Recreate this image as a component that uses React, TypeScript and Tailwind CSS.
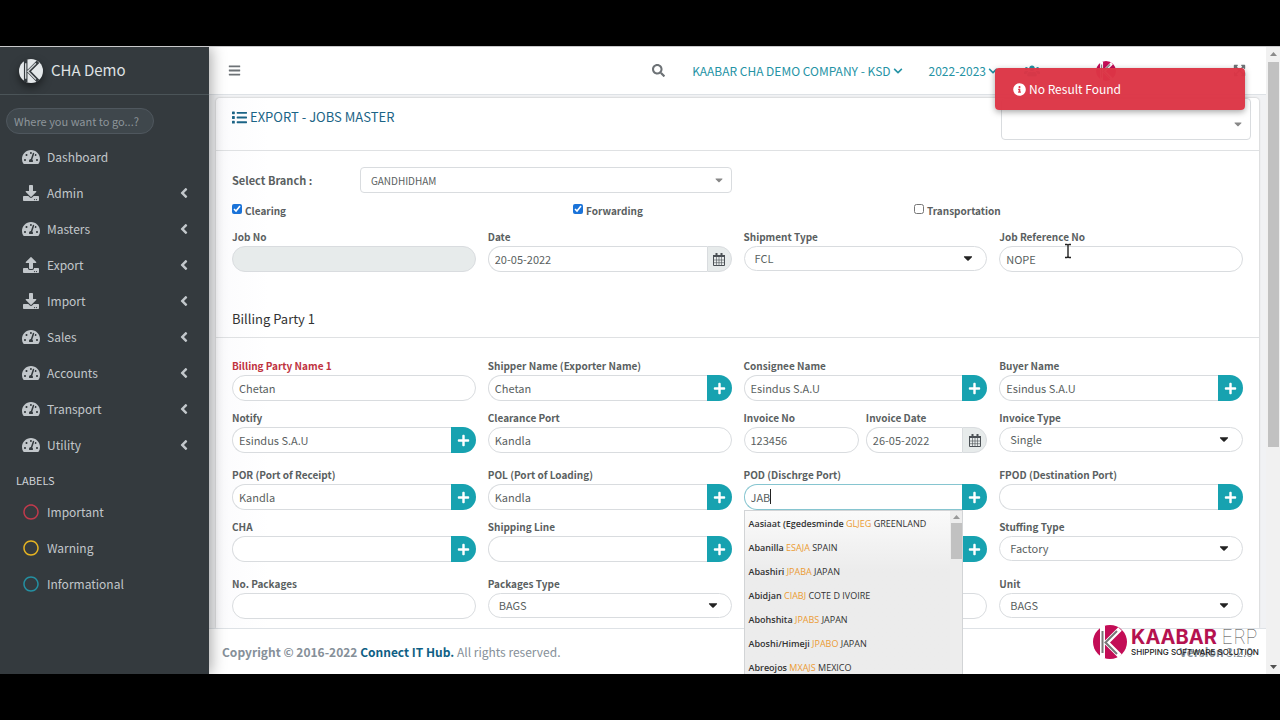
import type { ReactNode } from 'react';
import {
  FaAngleLeft,
  FaBars,
  FaCaretDown,
  FaChevronDown,
  FaDownload,
  FaExpandArrowsAlt,
  FaInfoCircle,
  FaList,
  FaPlus,
  FaRegCircle,
  FaSearch,
  FaTachometerAlt,
  FaUpload,
  FaUsers,
} from 'react-icons/fa';

const menu = [
  { name: 'Dashboard', icon: FaTachometerAlt, tree: false },
  { name: 'Admin', icon: FaDownload, tree: true },
  { name: 'Masters', icon: FaTachometerAlt, tree: true },
  { name: 'Export', icon: FaUpload, tree: true },
  { name: 'Import', icon: FaDownload, tree: true },
  { name: 'Sales', icon: FaTachometerAlt, tree: true },
  { name: 'Accounts', icon: FaTachometerAlt, tree: true },
  { name: 'Transport', icon: FaTachometerAlt, tree: true },
  { name: 'Utility', icon: FaTachometerAlt, tree: true },
];

const labels = [
  { name: 'Important', color: 'text-[#c03a4c]' },
  { name: 'Warning', color: 'text-[#e6b422]' },
  { name: 'Informational', color: 'text-[#2490a2]' },
];

const ports = [
  { name: 'Aasiaat (Egedesminde', code: 'GLJEG', country: 'GREENLAND' },
  { name: 'Abanilla', code: 'ESAJA', country: 'SPAIN' },
  { name: 'Abashiri', code: 'JPABA', country: 'JAPAN' },
  { name: 'Abidjan', code: 'CIABJ', country: 'COTE D IVOIRE' },
  { name: 'Abohshita', code: 'JPABS', country: 'JAPAN' },
  { name: 'Aboshi/Himeji', code: 'JPABO', country: 'JAPAN' },
  { name: 'Abreojos', code: 'MXAJS', country: 'MEXICO' },
];

export default function App() {
  return (
    <div className="flex h-screen flex-col overflow-hidden bg-black font-['Noto_Sans_CJK_SC','Noto_Sans',sans-serif] text-[#5a5f61]">
      <div className="h-[46px] shrink-0" />
      <div className="relative flex min-h-0 flex-1 overflow-hidden border-t border-[#c9c9cb] bg-[#f4f6f9]">
        <Sidebar />
        <div className="flex min-w-0 flex-1 flex-col">
          <Navbar />
          <main className="bg-[#f1f2f4] px-[7px] pt-[3px]">
            <JobForm />
          </main>
          <footer className="flex flex-1 items-start justify-between border-t border-[#dee2e6] bg-white px-[13px] pt-[11px] text-[12px] leading-6 text-[#869099]">
            <p>
              <strong>
                Copyright © 2016-2022 <a href="#" className="text-[#0f5f85]">Connect IT Hub.</a>
              </strong>{' '}
              All rights reserved.
            </p>
            <p>
              <b>Version</b> 3.2.0
            </p>
          </footer>
        </div>
        <Scrollbar />
        <Toast />
        <Watermark />
        {/* Text pointer */}
        <svg className="absolute top-[196px] left-[1063px] h-4 w-[10px] text-[#222]" viewBox="0 0 10 16" fill="none" stroke="currentColor" strokeWidth="1.4">
          <path d="M2 1.500h2l1 .8 1-.8h2M5 2v11.500M2 14.500h2l1-.8 1 .8h2" />
        </svg>
      </div>
      <div className="h-[46px] shrink-0" />
    </div>
  );
}

function Sidebar() {
  return (
    <aside className="z-10 flex w-[209px] shrink-0 flex-col bg-[#343a3e] text-[#c2c7cb] shadow-[2px_0_14px_rgba(0,0,0,0.35)]">
      <a href="#" className="flex h-12 items-center gap-2 border-b border-[#4b5458] pl-[19px] text-[15px] text-[#dfe1e3]">
        <span className="rounded-full shadow-[0_4px_8px_rgba(0,0,0,0.5)]">
          <KaabarMark className="h-6 w-6" disc="#e4e8ea" stroke="#343a3e" letter="#cfd3d6" />
        </span>
        CHA Demo
      </a>
      <input
        type="text"
        aria-label="Search menu"
        placeholder="Where you want to go...?"
        className="mt-[13px] mb-[5px] ml-[6px] h-[26px] w-[148px] rounded-full border border-[#4f575e] bg-[#3f474c] px-[7px] text-[11px] placeholder:text-[#8d959a]"
      />
      <nav>
        {menu.map(({ name, icon: Icon, tree }) => (
          <a key={name} href="#" className="flex h-9 items-center pr-5 pl-[22px] text-[12px]">
            <Icon className="mr-[7px] h-4 w-[18px]" />
            <span className="flex-1">{name}</span>
            {tree && <FaAngleLeft className="h-4 w-[10px]" />}
          </a>
        ))}
        <h2 className="flex h-[31px] items-end pb-1 pl-4 text-[11px] leading-5 text-[#d0d4d8]">LABELS</h2>
        {labels.map(({ name, color }) => (
          <a key={name} href="#" className="flex h-9 items-center pl-[22px] text-[12px]">
            <FaRegCircle className={`mr-[7px] h-4 w-[18px] ${color}`} />
            {name}
          </a>
        ))}
      </nav>
    </aside>
  );
}

function Navbar() {
  return (
    <header className="flex h-12 shrink-0 items-center border-b border-[#dee2e6] bg-white pr-5 pl-[19px] text-[12px] text-[#2593a5]">
      <button aria-label="Toggle menu" className="text-[#6d7276]">
        <FaBars className="h-[13px] w-[13px]" />
      </button>
      <button aria-label="Search" className="mr-[27px] ml-auto text-[#6d7276]">
        <FaSearch className="h-[13px] w-[13px]" />
      </button>
      <button className="mr-[26px] flex items-center gap-[2px]">
        KAABAR CHA DEMO COMPANY - KSD <FaChevronDown className="h-[10px] w-[10px]" />
      </button>
      <button className="mr-[26px] flex items-center gap-[2px]">
        2022-2023 <FaChevronDown className="h-[10px] w-[10px]" />
      </button>
      <button aria-label="Users" className="mr-[54px]">
        <FaUsers className="h-4 w-4" />
      </button>
      <KaabarMark className="mr-[115px] h-5 w-6" disc="#c30d56" stroke="#fff" letter="#888" />
      <button aria-label="Full screen" className="text-[#6d7276]">
        <FaExpandArrowsAlt className="h-[13px] w-[13px]" />
      </button>
    </header>
  );
}

function JobForm() {
  return (
    <form className="rounded-t bg-linear-to-r from-[#fbfbfd] to-white to-5% shadow-[0_0_2px_rgba(0,0,0,0.3)]">
      <div className="flex h-[53px] justify-between border-b border-[#dfe1e3] pr-2 pl-4">
        <h1 className="flex items-center gap-[3px] self-start pt-[9px] text-[13px] leading-5 text-[#1b6486]">
          <FaList className="h-[15px] w-[15px]" /> EXPORT - JOBS MASTER
        </h1>
        <div className="relative h-[42px] w-[250px]">
          <select aria-label="Job" className="block h-full w-full appearance-none rounded border border-[#d9dcdf] bg-white" />
          <FaCaretDown className="pointer-events-none absolute right-[7px] bottom-[10px] h-3 w-3 text-[#888]" />
        </div>
      </div>

      <div className="px-4 pt-4">
        <div className="grid grid-cols-8 items-center gap-x-3">
          <label htmlFor="branch" className="text-[11px] font-bold whitespace-nowrap">
            Select Branch :
          </label>
          <div className="relative col-span-3">
            <select id="branch" className="block h-[26px] w-full appearance-none rounded border border-[#d9dcdf] bg-white px-[10px] text-[10px]">
              <option>GANDHIDHAM</option>
            </select>
            <FaCaretDown className="pointer-events-none absolute top-[7px] right-[7px] h-3 w-3 text-[#888]" />
          </div>
        </div>

        <div className="mt-2 grid grid-cols-3 gap-x-3">
          <Check id="clearing" label="Clearing" checked />
          <Check id="forwarding" label="Forwarding" checked />
          <Check id="transportation" label="Transportation" />
        </div>

        <Row className="mt-[9px]">
          <Field id="job-no" label="Job No" disabled />
          <Field id="date" label="Date" value="20-05-2022" addon="calendar" />
          <SelectField id="shipment" label="Shipment Type" value="FCL" />
          <Field id="reference" label="Job Reference No" value="NOPE" />
        </Row>
      </div>

      <h2 className="mt-9 border-b border-[#dfe1e3] px-4 pb-[7px] text-[13px] leading-[22px] text-[#333]">Billing Party 1</h2>

      <div className="px-4 pt-[19px] pb-[9px]">
        <Row>
          <Field id="billing" label="Billing Party Name 1" value="Chetan" required />
          <Field id="shipper" label="Shipper Name (Exporter Name)" value="Chetan" addon="plus" />
          <Field id="consignee" label="Consignee Name" value="Esindus S.A.U" addon="plus" />
          <Field id="buyer" label="Buyer Name" value="Esindus S.A.U" addon="plus" />
        </Row>
        <Row className="mt-2">
          <Field id="notify" label="Notify" value="Esindus S.A.U" addon="plus" />
          <Field id="clearance" label="Clearance Port" value="Kandla" />
          <div className="grid grid-cols-[19fr_20fr] gap-[7px]">
            <Field id="invoice-no" label="Invoice No" value="123456" />
            <Field id="invoice-date" label="Invoice Date" value="26-05-2022" addon="calendar" />
          </div>
          <SelectField id="invoice-type" label="Invoice Type" value="Single" />
        </Row>
        <Row className="mt-[13px]">
          <Field id="por" label="POR (Port of Receipt)" value="Kandla" addon="plus" />
          <Field id="pol" label="POL (Port of Loading)" value="Kandla" addon="plus" />
          <div className="relative">
            <Field id="pod" label="POD (Dischrge Port)" value="JAB" addon="plus" active />
            <PortList />
          </div>
          <Field id="fpod" label="FPOD (Destination Port)" addon="plus" />
        </Row>
        <Row className="mt-2">
          <Field id="cha" label="CHA" addon="plus" />
          <Field id="line" label="Shipping Line" addon="plus" />
          <Field id="forwarder" addon="plus" />
          <SelectField id="stuffing" label="Stuffing Type" value="Factory" />
        </Row>
        <Row className="mt-[13px]">
          <Field id="packages" label="No. Packages" />
          <SelectField id="packages-type" label="Packages Type" value="BAGS" />
          <Field id="weight" />
          <SelectField id="unit" label="Unit" value="BAGS" />
        </Row>
      </div>
    </form>
  );
}

function Row({ className = '', children }: { className?: string; children: ReactNode }) {
  return <div className={`grid grid-cols-4 gap-x-3 ${className}`}>{children}</div>;
}

function Check({ id, label, checked = false }: { id: string; label: string; checked?: boolean }) {
  return (
    <div className="flex h-[18px] items-center gap-[3px]">
      <input id={id} type="checkbox" defaultChecked={checked} className="mb-[3px] h-[10px] w-[10px] accent-[#1a73d9]" />
      <label htmlFor={id} className="text-[10px] font-bold">{label}</label>
    </div>
  );
}

interface FieldProps {
  id: string;
  label?: string;
  value?: string;
  addon?: 'plus' | 'calendar';
  disabled?: boolean;
  required?: boolean;
  active?: boolean;
}

function Field({ id, label, value = '', addon, disabled, required, active }: FieldProps) {
  return (
    <div className="min-w-0">
      <label htmlFor={id} className={`block h-[18px] text-[10px] leading-[18px] font-bold whitespace-nowrap ${required ? 'text-[#c0333f]' : ''}`}>
        {label}
      </label>
      <div className="relative flex h-[26px]">
        <input
          id={id}
          type="text"
          aria-label={label ?? id}
          defaultValue={value}
          disabled={disabled}
          className={`min-w-0 flex-1 border px-[6px] text-[11px] ${addon ? 'rounded-l-full border-r-0' : 'rounded-full'} ${disabled ? 'bg-[#e7ebeb]' : 'bg-white'} ${active ? 'border-[#86c5d0]' : 'border-[#d9dcdf]'}`}
        />
        {active && <span className="absolute top-[5px] left-[26px] h-[15px] w-px bg-[#222]" />}
        {addon === 'plus' && (
          <button type="button" aria-label="Add" className="flex w-[25px] items-center justify-center rounded-r-full bg-[#17a2b0] text-white">
            <FaPlus className="h-[13px] w-[13px]" />
          </button>
        )}
        {addon === 'calendar' && (
          <button type="button" aria-label="Pick date" className="flex w-[25px] items-center justify-center rounded-r-full border border-[#d9dcdf] bg-[#e7ebeb] text-[#4b5055]">
            <CalendarIcon />
          </button>
        )}
      </div>
    </div>
  );
}

function SelectField({ id, label, value }: { id: string; label: string; value: string }) {
  return (
    <div className="min-w-0">
      <label htmlFor={id} className="block h-[18px] text-[10px] leading-[18px] font-bold">
        {label}
      </label>
      <div className="relative">
        <select id={id} className="block h-[25px] w-full appearance-none rounded-full border border-[#d9dcdf] bg-white px-[10px] text-[11px]">
          <option>{value}</option>
        </select>
        <FaCaretDown className="pointer-events-none absolute top-[5px] right-3 h-[14px] w-[14px] text-[#222]" />
      </div>
    </div>
  );
}

function PortList() {
  return (
    <div className="absolute top-[44px] right-6 left-0 z-20 flex border border-[#d2d4d6] bg-linear-to-b from-[#fafafa] to-[#ececec] to-[60px]">
      <ul className="min-w-0 flex-1 pt-[1px] pl-1 font-['Open_Sans',sans-serif] text-[9px] text-[#333]">
        {ports.map((p) => (
          <li key={p.code} className="h-6 leading-6 font-semibold whitespace-nowrap">
            {p.name} <span className="font-medium text-[#eb9b33]">{p.code}</span> <span className="font-medium">{p.country}</span>
          </li>
        ))}
      </ul>
      <div className="flex w-3 flex-col items-center bg-[#ededed] pt-[4px]">
        <Triangle className="text-[#999]" />
        <div className="mt-1 h-9 w-[11px] bg-[#c1c1c1]" />
      </div>
    </div>
  );
}

function Scrollbar() {
  return (
    <div className="flex w-[14px] shrink-0 flex-col items-center bg-[#f1f1f1] py-[5px]">
      <Triangle className="text-[#8b8b8b]" />
      <div className="mt-[6px] h-[385px] w-[11px] bg-[#c1c1c1]" />
      <Triangle className="mt-auto rotate-180 text-[#505050]" />
    </div>
  );
}

function Triangle({ className }: { className: string }) {
  return (
    <svg className={`h-1 w-[7px] shrink-0 ${className}`} viewBox="0 0 7 4" fill="currentColor">
      <path d="M0 4 3.500 0 7 4z" />
    </svg>
  );
}

function Toast() {
  return (
    <div role="alert" className="absolute top-[21px] right-[35px] z-30 flex h-[42px] w-[250px] items-center gap-[3px] rounded bg-[#dc3545]/97 pl-[18px] text-[12px] text-white shadow-[0_2px_6px_rgba(0,0,0,0.35)]">
      <FaInfoCircle className="h-[13px] w-[13px]" />
      No Result Found
    </div>
  );
}

function Watermark() {
  return (
    <div className="absolute right-[22px] bottom-[15px] z-20 flex items-center gap-1 font-['Inter',sans-serif]">
      <KaabarMark className="h-[34px] w-[34px]" disc="#c30d56" stroke="#fff" letter="#777" />
      <div className="w-[127px] whitespace-nowrap">
        <p className="text-[20px] leading-5 font-bold text-[#b5124f]">
          KAABAR <span className="font-thin text-[#444]">ERP</span>
        </p>
        <p className="text-[8px] leading-[10px] font-medium text-[#222]">SHIPPING SOFTWARE SOLUTION</p>
      </div>
    </div>
  );
}

function KaabarMark({ className, disc, stroke, letter }: { className: string; disc: string; stroke: string; letter: string }) {
  return (
    <svg className={className} viewBox="0 0 34 34" fill="none">
      <circle cx="17" cy="17" r="17" fill={disc} />
      <path d="M9.500 1v32M27 4 13.500 17.500 27 31" stroke={stroke} strokeWidth="5" />
      <path d="M9.500 6v22M24 6 12.500 17.500 24 29" stroke={letter} strokeWidth="2" />
    </svg>
  );
}

function CalendarIcon() {
  return (
    <svg className="h-[13px] w-[12px]" viewBox="0 0 12 13" fill="none" stroke="currentColor">
      <path d="M.5 2.500h11v10H.5z" />
      <path d="M0 3h12" strokeWidth="2" />
      <path d="M3.500 0v3M8.500 0v3" strokeWidth="2" />
      <path d="M3.500 4v8M6 4v8M8.500 4v8M1 7h10M1 9.700h10" strokeWidth=".6" />
    </svg>
  );
}
